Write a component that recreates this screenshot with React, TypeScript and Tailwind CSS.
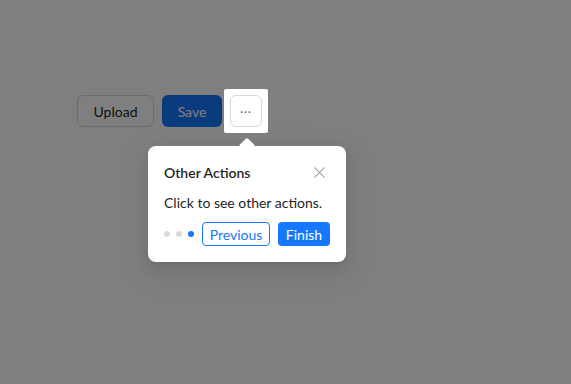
import { X } from "lucide-react"

function Dot({ active }: { active?: boolean }) {
  return <span className={`block h-[6px] w-[6px] rounded-full ${active ? "bg-[#1677ff]" : "bg-[#d9d9d9]"}`} />
}

export default function App() {
  return (
    <div
      className="relative h-[384px] w-[571px] overflow-hidden bg-white text-[14px] text-[#1f1f1f]"
      style={{ fontFamily: "Lato, 'Liberation Sans', sans-serif" }}
    >
      <div className="flex items-center gap-2 pl-[77px] pt-[95px]">
        <button className="h-8 w-[77px] rounded-md border border-[#d9d9d9] bg-white text-[#1f1f1f]">Upload</button>
        <button className="h-8 w-[60px] rounded-md bg-[#1677ff] text-white">Save</button>
        <div className="relative">
          {/* spotlight: white cut-out with a huge shadow as the mask */}
          <div className="absolute -inset-[6px] rounded-[2px] bg-white shadow-[0_0_0_2000px_rgba(0,0,0,0.5)]" />
          <button className="relative flex h-8 w-8 items-center justify-center rounded-md border border-[#d9d9d9] bg-white text-[#595959]">
            <span className="text-[11px] leading-none tracking-[1px]">···</span>
          </button>

          <div className="absolute left-[-82px] top-[51px] z-10 w-[198px] rounded-lg bg-white shadow-[0_6px_16px_0_rgba(0,0,0,0.08),0_3px_6px_-4px_rgba(0,0,0,0.12),0_9px_28px_8px_rgba(0,0,0,0.05)]">
            <div className="absolute left-1/2 top-[-6px] h-3 w-3 -translate-x-1/2 rotate-45 rounded-[2px] bg-white" />
            <button className="absolute right-[16px] top-[15px] flex h-[22px] w-[22px] items-center justify-center text-[#8c8c8c]">
              <X size={19} strokeWidth={1.3} />
            </button>
            <div className="relative px-4 pb-2 pt-4 font-semibold leading-[22px]">Other Actions</div>
            <div className="relative px-4 leading-[22px]">Click to see other actions.</div>
            <div className="relative flex items-center justify-between px-4 pb-4 pt-2">
              <div className="flex items-center gap-[6px]">
                <Dot />
                <Dot />
                <Dot active />
              </div>
              <div className="flex items-center gap-2">
                <button className="h-6 w-[68px] rounded border border-[#1677ff] bg-white text-[#1677ff]">Previous</button>
                <button className="h-6 w-[52px] rounded bg-[#1677ff] text-white">Finish</button>
              </div>
            </div>
          </div>
        </div>
      </div>
    </div>
  )
}
